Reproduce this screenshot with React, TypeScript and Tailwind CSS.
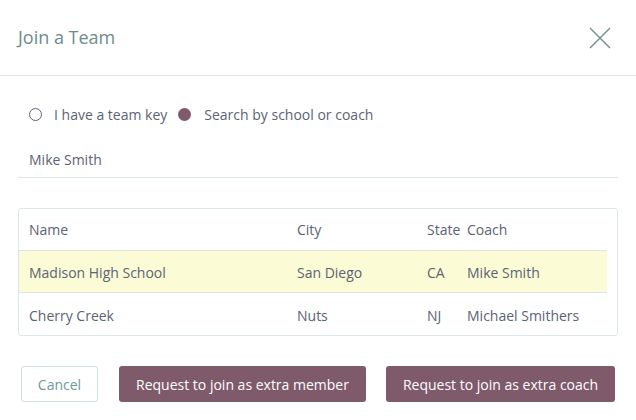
const rows = [
  { name: 'Madison High School', city: 'San Diego', state: 'CA', coach: 'Mike Smith', selected: true },
  { name: 'Cherry Creek', city: 'Nuts', state: 'NJ', coach: 'Michael Smithers', selected: false },
];

const cols = 'grid grid-cols-[268px_130px_40px_150px]';

export default function App() {
  return (
    <div className="w-[636px] h-[420px] bg-white text-[14px] text-[#5b6374] font-['Open_Sans',sans-serif]">
      <div className="h-[76px] px-[18px] flex items-center justify-between border-b border-[#dde7e7]">
        <h1 className="text-[18px] text-[#6d8c8a] font-normal">Join a Team</h1>
        <svg width="22" height="22" viewBox="0 0 22 22" className="mr-[7px] text-[#739590]" fill="none" stroke="currentColor" strokeWidth="1.5">
          <path d="M1 1L21 21M21 1L1 21" />
        </svg>
      </div>
      <div className="px-[18px]">
        <div className="pt-[28px] flex items-center h-[48px] pl-[11px]">
          <span className="w-[13px] h-[13px] rounded-full border border-[#5b6374]" />
          <span className="ml-[12px]">I have a team key</span>
          <span className="ml-[11px] w-[13px] h-[13px] rounded-full bg-[#7e5a6b]" />
          <span className="ml-[13px]">Search by school or coach</span>
        </div>
        <div className="mt-[18px] h-[36px] flex items-center pl-[11px] border-b border-[#dde7e7]">
          Mike Smith
        </div>
        <div className="mt-[30px] border border-[#dde7e7] rounded-[3px] pr-[10px]">
          <div className={`${cols} h-[42px] items-center border-b border-[#dde7e7]`}>
            <div className="pl-[10px]">Name</div>
            <div className="pl-[10px]">City</div>
            <div className="pl-[10px]">State</div>
            <div className="pl-[10px]">Coach</div>
          </div>
          {rows.map((r, i) => (
            <div
              key={r.name}
              className={`${cols} h-[42px] pt-[2px] items-center ${i < rows.length - 1 ? 'border-b border-[#dde7e7]' : ''} ${r.selected ? 'bg-[#fbfbd6]' : ''}`}
            >
              <div className="pl-[10px]">{r.name}</div>
              <div className="pl-[10px]">{r.city}</div>
              <div className="pl-[10px]">{r.state}</div>
              <div className="pl-[10px]">{r.coach}</div>
            </div>
          ))}
        </div>
        <div className="mt-[30px] flex items-center pl-[3px]">
          <button className="w-[77px] h-[36px] rounded-[3px] border border-[#d3e0e0] text-[#6b9a9c]">Cancel</button>
          <button className="ml-[21px] w-[247px] h-[36px] rounded-[3px] bg-[#7e5a6b] text-white">Request to join as extra member</button>
          <button className="ml-[20px] w-[229px] h-[36px] rounded-[3px] bg-[#7e5a6b] text-white">Request to join as extra coach</button>
        </div>
      </div>
    </div>
  );
}
